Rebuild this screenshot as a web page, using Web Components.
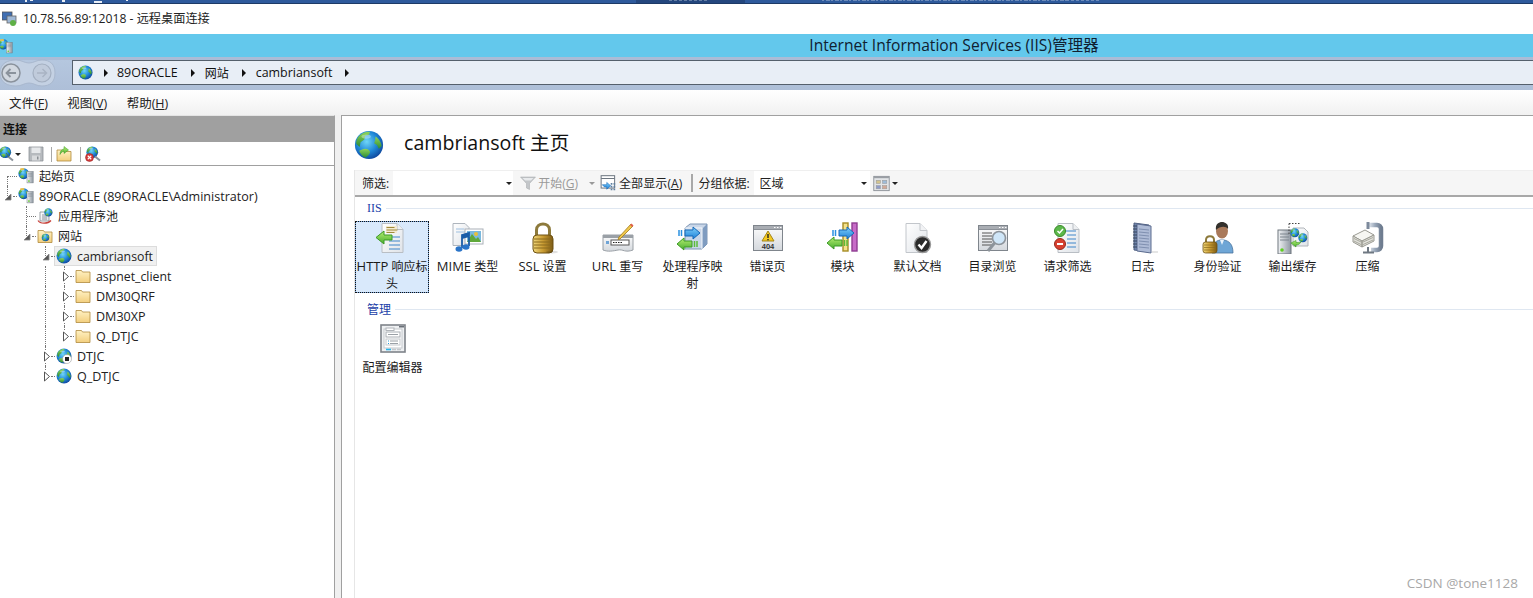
<!DOCTYPE html>
<html lang="zh">
<head>
<meta charset="utf-8">
<title>IIS</title>
<style>
  html, body { margin: 0; height: 100%; background: #fff; overflow: hidden; }
  body { font: 12px "Open Sans", "Noto Sans CJK SC", sans-serif; color: #1a1a1a; }
  feature-item span { font-size: 13px; }
</style>
</head>
<body>
<iis-app>
  <top-strip></top-strip>
  <rdp-title>10.78.56.89:12018 - 远程桌面连接</rdp-title>
  <iis-banner>Internet Information Services (IIS)管理器</iis-banner>
  <nav-bar>
    <crumb-item icon="globe"></crumb-item>
    <crumb-item>89ORACLE</crumb-item>
    <crumb-item cjk>网站</crumb-item>
    <crumb-item>cambriansoft</crumb-item>
  </nav-bar>
  <menu-bar>
    <span>文件(<u>F</u>)</span>
    <span>视图(<u>V</u>)</span>
    <span>帮助(<u>H</u>)</span>
  </menu-bar>
  <main-split>
    <conn-panel slot="left">
      <tree-node icon="start" cells="corner" cjk>起始页</tree-node>
      <tree-node icon="start" cells="open" wide>89ORACLE (89ORACLE\Administrator)</tree-node>
      <tree-node icon="pool" cells="none branch" cjk>应用程序池</tree-node>
      <tree-node icon="sites" cells="none open" cjk>网站</tree-node>
      <tree-node icon="globe" cells="none none open" selected>cambriansoft</tree-node>
      <tree-node icon="folder" cells="none none line closed">aspnet_client</tree-node>
      <tree-node icon="folder" cells="none none line closed" wide>DM30QRF</tree-node>
      <tree-node icon="folder" cells="none none line closed" wide>DM30XP</tree-node>
      <tree-node icon="folder" cells="none none line closed end" wide>Q_DTJC</tree-node>
      <tree-node icon="globestop" cells="none none closed" wide>DTJC</tree-node>
      <tree-node icon="globe" cells="none none closed end" wide>Q_DTJC</tree-node>
    </conn-panel>
    <home-page slot="right" heading="cambriansoft 主页">
      <filter-bar></filter-bar>
      <feature-group label="IIS">
        <feature-item icon="http" selected><span>HTTP</span> 响应标头</feature-item>
        <feature-item icon="mime"><span>MIME</span> 类型</feature-item>
        <feature-item icon="ssl"><span>SSL</span> 设置</feature-item>
        <feature-item icon="url"><span>URL</span> 重写</feature-item>
        <feature-item icon="handler">处理程序映射</feature-item>
        <feature-item icon="error">错误页</feature-item>
        <feature-item icon="modules">模块</feature-item>
        <feature-item icon="defdoc">默认文档</feature-item>
        <feature-item icon="browse">目录浏览</feature-item>
        <feature-item icon="reqfilter">请求筛选</feature-item>
        <feature-item icon="log">日志</feature-item>
        <feature-item icon="auth">身份验证</feature-item>
        <feature-item icon="cache">输出缓存</feature-item>
        <feature-item icon="compress">压缩</feature-item>
      </feature-group>
      <feature-group label="管理">
        <feature-item icon="config">配置编辑器</feature-item>
      </feature-group>
    </home-page>
  </main-split>
  <water-mark>CSDN @tone1128</water-mark>
</iis-app>

<script>
const DEFS = `<defs>
  <radialGradient id="sea" cx=".42" cy=".38" r=".68"><stop offset="0" stop-color="#6fd6f7"/><stop offset=".55" stop-color="#1f86d6"/><stop offset="1" stop-color="#0c3f96"/></radialGradient>
  <linearGradient id="land" x1="0" y1="0" x2="0" y2="1"><stop offset="0" stop-color="#8ed45a"/><stop offset="1" stop-color="#2c8c35"/></linearGradient>
  <linearGradient id="paper" x1="0" y1="0" x2="1" y2="1"><stop offset="0" stop-color="#fff"/><stop offset="1" stop-color="#dfe3e8"/></linearGradient>
  <linearGradient id="fold" x1="0" y1="0" x2="0" y2="1"><stop offset="0" stop-color="#fff2c4"/><stop offset="1" stop-color="#f3cf7e"/></linearGradient>
  <linearGradient id="steel" x1="0" y1="0" x2="1" y2="0"><stop offset="0" stop-color="#f2f4f6"/><stop offset="1" stop-color="#8f98a2"/></linearGradient>
  <linearGradient id="gold" x1="0" y1="0" x2="1" y2="0"><stop offset="0" stop-color="#f0d87c"/><stop offset=".5" stop-color="#c99b32"/><stop offset="1" stop-color="#7c5a14"/></linearGradient>
  <linearGradient id="blueArrow" x1="0" y1="0" x2="0" y2="1"><stop offset="0" stop-color="#7fd0fa"/><stop offset="1" stop-color="#1c7fd8"/></linearGradient>
  <linearGradient id="greenArrow" x1="0" y1="0" x2="0" y2="1"><stop offset="0" stop-color="#b6ee72"/><stop offset="1" stop-color="#46ad2e"/></linearGradient>
  <linearGradient id="win" x1="0" y1="0" x2="0" y2="1"><stop offset="0" stop-color="#fdfdfd"/><stop offset="1" stop-color="#d4d8dd"/></linearGradient>
  <linearGradient id="clamp" x1="0" y1="0" x2="1" y2="0"><stop offset="0" stop-color="#dfe5ec"/><stop offset=".5" stop-color="#9aa8ba"/><stop offset="1" stop-color="#6f7d90"/></linearGradient>
</defs>`;

// globe drawn in a 32 box, moved and scaled by the caller
const globe = (x = 0, y = 0, s = 1) => `<g transform="translate(${x} ${y}) scale(${s})">
  <circle cx="16" cy="16" r="15" fill="url(#sea)"/>
  <path d="M7 5c3-2.500 7-3.500 10-3l-1 3-4 1-1 4-4 3-1 5-3.500-3C2 11 4 7 7 5z" fill="url(#land)"/>
  <path d="M8 21c4-2 8-1 9 2 .5 2-2 5-5 6.500C9 28 6.500 25 5.500 22z" fill="url(#land)"/>
  <path d="M23 7c3 2 6 6 6.500 10l-3 3-2-4-3-2 1-3z" fill="url(#land)"/>
  <ellipse cx="13" cy="7" rx="5" ry="2.200" fill="#fff" opacity=".35"/>
</g>`;
const tower = (x, y, s = 1) => `<g transform="translate(${x} ${y}) scale(${s})">
  <rect x="0" y="0" width="13" height="24" fill="url(#steel)" stroke="#6f767e"/>
  <path d="M2 4h9M2 7h9M2 10h9" stroke="#7d858e"/>
  <circle cx="4" cy="20" r="1.800" fill="#5fd01f"/>
</g>`;
const arrowR = (x, y) => `<path transform="translate(${x} ${y})" d="M6 3h8V0l7 6-7 6V9H6z" fill="url(#blueArrow)" stroke="#1668b8"/><path transform="translate(${x} ${y})" d="M0 3v6M2.500 3v6" stroke="#2a90e0" stroke-width="1.500"/>`;
const arrowL = (x, y) => `<path transform="translate(${x} ${y})" d="M15 3H7V0L0 6l7 6V9h8z" fill="url(#greenArrow)" stroke="#3c9a26"/><path transform="translate(${x} ${y})" d="M17.500 3v6M20 3v6" stroke="#5cbc3a" stroke-width="1.500"/>`;
const page = `<path d="M6 1.500h15l6 6v23H6z" fill="url(#paper)" stroke="#b9bec4"/><path d="M21 1.500v6h6" fill="#eef0f2" stroke="#b9bec4"/>`;
const folder = `<path d="M2 8V5h11l2 3h15v21H2z" fill="url(#fold)" stroke="#b08a3e" stroke-width="1.600"/>`;
const winFrame = `<rect x="1.500" y="3.500" width="29" height="25" fill="url(#win)" stroke="#7f858c"/><path d="M2 7.500h28" stroke="#8b9097"/><rect x="2" y="4" width="28" height="3" fill="#a9adb3"/><path d="M22 5.500h1.500M25 5.500h1.500M28 5.500h1.500" stroke="#fff"/>`;

const ICONS = {
  globe: globe(),
  globestop: globe() + `<circle cx="22" cy="22" r="9" fill="#fff" stroke="#888"/><rect x="18" y="18" width="8" height="8" fill="#222"/>`,
  start: globe(0, 0, .72) + tower(18, 7, .95) + `<path d="M5 0h7l1 4H4z" fill="#f1c24c" opacity=".85"/>`,
  pool: `<path d="M6 8h18v18H6z" fill="url(#paper)" stroke="#7f858c" stroke-width="1.500"/><path d="M10 14h10M10 18h10M10 22h10" stroke="#6f7780" stroke-width="1.500"/>` + globe(14, 0, .55) + `<path d="M2 25c4 7 20 7 26 0" fill="none" stroke="#c8413a" stroke-width="2.400"/>`,
  sites: folder + globe(9, 11, .5),
  folder: folder,
  connect: globe(0, 0, .78) + `<path d="M18 21l10 8" stroke="#8a929b" stroke-width="4"/><path d="M14 14l6 8" stroke="#4f7f3c" stroke-width="2"/>`,
  save: `<path d="M2 2h28v28H2z" fill="#b6babe" stroke="#8a8f94" stroke-width="1.500"/><rect x="7" y="3" width="18" height="11" fill="#e6e8ea"/><rect x="8" y="19" width="16" height="10" fill="#d8dadc"/><rect x="18" y="21" width="3" height="6" fill="#8a8f94"/>`,
  upfolder: `<path d="M2 11V8h11l2 3h15v19H2z" fill="url(#fold)" stroke="#b08a3e" stroke-width="1.600"/><path d="M8 17c0-7 3-10 8-11V1l9 7-9 7v-5c-3 1-6 3-8 7z" fill="url(#greenArrow)" stroke="#3c9a26"/>`,
  disconnect: globe(2, 0, .78) + `<path d="M20 21l10 8" stroke="#8a929b" stroke-width="4"/><circle cx="9" cy="23" r="8" fill="#d63a3a" stroke="#8e1f1f"/><path d="M5.500 19.500l7 7M12.500 19.500l-7 7" stroke="#fff" stroke-width="2.200"/>`,
  funnel: `<path d="M1 4h30L19 17v12l-6-3v-9z" fill="#c3c6c9" stroke="#a3a6a9"/><path d="M5 6h22l-5 5H10z" fill="#e8eaec"/>`,
  showall: `<rect x="2" y="3" width="24" height="22" fill="#fff" stroke="#6d7680" stroke-width="1.800"/><path d="M2 8h24" stroke="#6d7680" stroke-width="1.800"/><path d="M19 16h3v3h-3zM24 16h3v3h-3zM19 21h3v3h-3zM24 21h3v3h-3zM24 26h3v3h-3zM19 26h3v3h-3z" fill="#5f7f9f"/><path d="M4 19h8v-4l7 6-7 6v-4H8z" fill="url(#blueArrow)" stroke="#1668b8"/>`,
  view: `<rect x="1.500" y="2.500" width="29" height="27" fill="#e3e5e8" stroke="#7f858c" stroke-width="1.500"/><rect x="2" y="3" width="28" height="3" fill="#9a9ea4"/><rect x="6" y="10" width="8" height="6" fill="#d2c48e" stroke="#999"/><rect x="18" y="10" width="8" height="6" fill="#9dbbd8" stroke="#999"/><rect x="6" y="20" width="8" height="6" fill="#8f9cc8" stroke="#999"/><rect x="18" y="20" width="8" height="6" fill="#d2a896" stroke="#999"/>`,
  http: page + `<rect x="10" y="4" width="11" height="7" fill="#f4ead0"/><path d="M10.500 5.500h8M10.500 8h11M10.500 10.500h8" stroke="#a08a3a"/><path d="M13 15h11M13 19h11M13 23h11M13 27h11" stroke="#3f86c9" stroke-width="1.200"/>` + `<path d="M16 13H8V9l-8 6.500L8 22v-4h8z" fill="url(#greenArrow)" stroke="#3c9a26"/>`,
  mime: `<path d="M1 1.500h12l4 4v18H1z" fill="url(#paper)" stroke="#aeb5bd"/><path d="M4 7h8M4 10h9" stroke="#9fc0e0"/>
    <rect x="13" y="7" width="18" height="15" fill="#fff" stroke="#a9b0b8"/><rect x="15" y="9" width="14" height="11" fill="#79b8de"/><path d="M15 20l5-8 4 5 2-2 3 5z" fill="#5fa83a"/><circle cx="24" cy="12" r="2" fill="#e8c03a"/>
    <path d="M10 13v13M17 11v13M10 13l7-2v3l-7 2z" stroke="#1b5da8" stroke-width="1.800" fill="#1b5da8"/><ellipse cx="7" cy="27" rx="3.500" ry="2.800" fill="#2a74c8"/><ellipse cx="14" cy="25" rx="3.500" ry="2.800" fill="#2a74c8"/>`,
  ssl: `<path d="M9.500 15V8c0-8 13-8 13 0v7" fill="none" stroke="#8d7a3c" stroke-width="3"/><rect x="6" y="13" width="20" height="18" rx="4" fill="url(#gold)" stroke="#6e5214"/><path d="M7 17h18M7 20h18M7 23h18M7 26h18" stroke="#8a6a1e"/><ellipse cx="25" cy="30" rx="6" ry="1.400" fill="#000" opacity=".12"/>`,
  url: `<path d="M1 13h30v15c-8 3-10-1-15 0-5 1-10 2-15 0z" fill="url(#win)" stroke="#9aa0a6"/><rect x="1" y="13" width="30" height="3" fill="#9aa0a6"/><rect x="9" y="18" width="18" height="5" fill="#fff" stroke="#555"/><path d="M11 20.500h9" stroke="#222" stroke-dasharray="1.500 1"/><rect x="4" y="19" width="3" height="3" fill="#6fa4d6"/><path d="M17 15L29 2l2 2-13 13-2 .5z" fill="#f0c84c" stroke="#a07a1c" stroke-width=".8"/><path d="M28 3l1.500-1.500 2 2L30 5z" fill="#e0604c"/>`,
  handler: `<path d="M8 6l5-4h17v20l-5 5H8z" fill="#c9d6e8" stroke="#7e96b4"/><path d="M25 7l5-5v20l-5 5z" fill="#7f9cc0"/><path d="M8 6h17v21" fill="none" stroke="#f5f8fc"/>` + arrowR(2, 5) + arrowL(0, 16),
  error: winFrame + `<path d="M16 9l6 10H10z" fill="#f4c91f" stroke="#a4851a"/><rect x="15.300" y="12" width="1.400" height="4" fill="#222"/><rect x="15.300" y="17" width="1.400" height="1.300" fill="#222"/><text x="16" y="27" text-anchor="middle" font-family="Liberation Sans" font-weight="700" font-size="7.500" fill="#333">404</text>`,
  modules: `<rect x="16" y="1" width="5" height="28" fill="#f4e28c" stroke="#a68c24" stroke-width="1.400"/><rect x="25" y="1" width="5" height="28" fill="#c86cc8" stroke="#8f3c92" stroke-width="1.400"/>` + arrowR(6, 5) + arrowL(0, 15),
  defdoc: `<path d="M4 1.500h14l7 7v22H4z" fill="url(#paper)" stroke="#c2c6cb"/><path d="M18 1.500v7h7" fill="#f2f3f5" stroke="#c2c6cb"/><circle cx="20.500" cy="22.500" r="8" fill="#2a2a2a" stroke="#999" stroke-width="1.400"/><path d="M16.500 22.500l3 3.500 5-7" fill="none" stroke="#fff" stroke-width="2.400"/>`,
  browse: winFrame + `<path d="M5 11h10M5 14h10M5 17h10M5 20h10M5 23h10" stroke="#555"/><circle cx="22" cy="16" r="6.500" fill="#cfe6f8" stroke="#8d949b" stroke-width="1.600"/><path d="M17.500 21L11 29" stroke="#8d949b" stroke-width="3"/>`,
  reqfilter: page + `<path d="M13 9h11M15 13h9M15 17h9M15 21h9M15 25h9" stroke="#3f86c9" stroke-width="1.200"/><circle cx="8" cy="9" r="5.500" fill="#5cb84a" stroke="#3a8a2a"/><path d="M5.500 9l2 2 3.500-4" fill="none" stroke="#fff" stroke-width="1.500"/><circle cx="8" cy="22" r="5.500" fill="#d8402f" stroke="#952a1e"/><rect x="5" y="21" width="6" height="2" fill="#fff"/>`,
  log: `<path d="M7 1l15 2v27L7 28z" fill="#7186ad" stroke="#4f5f80"/><path d="M10 2l14 2v27l-14-2z" fill="#aebbd6" stroke="#5d6d90"/><path d="M12 7l10 1M12 10l10 1M12 13l10 1M12 16l10 1M12 19l10 1M12 22l10 1M12 25l10 1" stroke="#7f8fb0"/><path d="M6 4h4M6 7h4M6 10h4M6 13h4M6 16h4M6 19h4M6 22h4M6 25h4" stroke="#39465e"/><path d="M25 29h6v2h-6z" fill="#000" opacity=".1"/>`,
  auth: `<path d="M10 31c0-9 3-12 8-13h4c5 1 9 4 9 13z" fill="#6fa6d6" stroke="#47729c" stroke-width=".8"/><path d="M18 18l2 5 2-5z" fill="#eaf2fa"/><ellipse cx="20" cy="9" rx="6" ry="7.500" fill="#a9795a"/><path d="M14 8c-1-6 3-8 6-8s7 2 6 7c-2-3-8-3-12 1z" fill="#33302c"/><path d="M4 21v-3c0-5 8-5 8 0v3" fill="none" stroke="#8d7a3c" stroke-width="2"/><rect x="1" y="20" width="14" height="11" rx="2.500" fill="url(#gold)" stroke="#6e5214" stroke-width=".8"/><path d="M2 23h12M2 25.500h12M2 28h12" stroke="#8a6a1e" stroke-width=".7"/>`,
  cache: tower(1, 8, 1) + `<path d="M12 1.500h11M12 1.500v11" fill="none" stroke="#444" stroke-dasharray="1.500 1.500"/><path d="M16 6h11l4 4v14H16z" fill="url(#paper)" stroke="#b0b5ba"/>` + globe(13, 6, .3) + globe(21, 11, .3) + `<path d="M14 21l5 4v-2c2 0 4-1 5-3-2 .5-3 .5-5 .5v-2z" fill="url(#greenArrow)" stroke="#3c9a26" stroke-width=".6"/>`,
  compress: `<path d="M17 3h8a4 4 0 014 4v17a4 4 0 01-4 4h-6" fill="none" stroke="url(#clamp)" stroke-width="4.500"/><path d="M16 0v7" stroke="#7d8a9c" stroke-width="3"/><path d="M1 14l12-6 9 5-12 6z" fill="#f6f6f2" stroke="#9a9a92"/><path d="M1 14v6l9 5v-6zM10 19v6l12-6v-6z" fill="#e2e2dc" stroke="#9a9a92"/><path d="M2 16.500l8 4 11-5M2 19l8 4 11-5" stroke="#a8a89e" fill="none"/><path d="M16 25v6M11 30.500h11" stroke="#6f7882" stroke-width="2"/>`,
  config: `<rect x="4" y="2" width="24" height="27" fill="#eef0f2" stroke="#7e8389" stroke-width="1.600"/><rect x="22" y="3" width="5" height="1.500" fill="#6a7078"/><rect x="7" y="6" width="18" height="19" fill="#fff" stroke="#c3c7cc"/><rect x="9" y="5" width="8" height="2.500" fill="#fff" stroke="#b0b4b9"/><rect x="9" y="9" width="14" height="5" fill="#fff" stroke="#a8adb3"/><path d="M11 11.500h10" stroke="#9aa0a6"/><rect x="9" y="16" width="14" height="6" fill="#fff" stroke="#c3c7cc"/><path d="M13 18h8M13 20.500h8" stroke="#9aa0a6"/><path d="M11 18h1M11 20.500h1" stroke="#2a9ad6"/><path d="M9 26.500h5" stroke="#2bb6ea" stroke-width="1.600"/><path d="M15 26.500h4M20 26.500h4" stroke="#c3c7cc" stroke-width="1.600"/>`
};

class IisIcon extends HTMLElement {
  connectedCallback() {
    const size = this.getAttribute("size") || 16;
    const shadow = this.shadowRoot || this.attachShadow({ mode: "open" });
    shadow.innerHTML = `<style>:host{display:block;width:${size}px;height:${size}px;flex:none}svg{display:block}</style>
      <svg width="${size}" height="${size}" viewBox="0 0 32 32">${DEFS}${ICONS[this.getAttribute("name")] || ""}</svg>`;
  }
}

class IisApp extends HTMLElement {
  constructor() {
    super();
    this.attachShadow({ mode: "open" }).innerHTML = `<style>
      :host{display:flex;flex-direction:column;height:598px;position:relative;overflow:hidden}
    </style><slot></slot>`;
  }
}

class TopStrip extends HTMLElement {
  constructor() {
    super();
    this.attachShadow({ mode: "open" }).innerHTML = `<style>
      :host{display:block;height:4px;background:#2e5a9c;border-bottom:1px solid #1d3a66;box-sizing:border-box;flex:none}
      svg{display:block}
    </style>
    <svg width="1533" height="3">
      <rect x="636" width="109" height="3" fill="#24477e"/>
      <g fill="#e8eef6">
        <rect x="25" width="2" height="2"/><rect x="30" width="3" height="1"/><rect x="62" width="3" height="2"/><rect x="94" y="1" width="8" height="2"/><rect x="126" width="2" height="1"/>
      </g>
      <g stroke="#dfe7f2" stroke-width="2" opacity=".35">
        <path d="M669 0h40" stroke-dasharray="3 2"/>
        <path d="M822 0h246" stroke-dasharray="2 2 4 1"/>
        <path d="M1061 0h38" stroke-dasharray="3 2"/>
      </g>
    </svg>`;
  }
}

class RdpTitle extends HTMLElement {
  constructor() {
    super();
    this.attachShadow({ mode: "open" }).innerHTML = `<style>
      :host{display:flex;align-items:center;gap:6px;height:30px;flex:none;box-sizing:border-box;background:#fff;padding:0 0 2px 2px;font-size:12.200px;color:#222}
      svg{flex:none}
    </style>
    <svg width="15" height="15" viewBox="0 0 15 15">
      <rect x="0" y="1" width="10" height="8" fill="#3f6fb4" stroke="#555" stroke-width=".8"/>
      <rect x="5" y="5" width="9" height="7" fill="#9fb8d6" stroke="#666" stroke-width=".8"/>
      <circle cx="11" cy="12" r="3" fill="#5fb046"/>
    </svg><slot></slot>`;
  }
}

class IisBanner extends HTMLElement {
  constructor() {
    super();
    this.attachShadow({ mode: "open" }).innerHTML = `<style>
      :host{display:flex;align-items:center;height:23px;flex:none;box-sizing:border-box;padding-bottom:2px;background:#63c8ec;font-size:15.600px;color:#102030}
      iis-icon{margin-left:-2px;margin-top:4px}
      .t{flex:1;text-align:center;padding-left:362px;white-space:nowrap}
    </style><iis-icon name="start" size="15"></iis-icon><div class="t"><slot></slot></div>`;
  }
}

class NavBar extends HTMLElement {
  constructor() {
    super();
    this.attachShadow({ mode: "open" }).innerHTML = `<style>
      :host{display:flex;height:33px;flex:none;box-sizing:border-box;padding-top:3px;background:linear-gradient(#aabcd6 0 3px,#b5c7df 3px,#aebfd8)}
      .nav{width:72px;flex:none;padding:0;box-sizing:border-box}
      svg{display:block;margin-top:-1px}
      .addr{flex:1;height:25px;box-sizing:border-box;background:#e8eef6;border:1px solid #55606c;border-width:1px 0 1px 1px;display:flex;align-items:center;padding-left:5px;font-size:12.450px;color:#111}
    </style>
    <div class="nav">
      <svg width="56" height="28" viewBox="0 0 56 28">
        <path d="M0 14C0 4 8 1 16 1c6 0 8 3 13 3s7-3 13-3c8 0 13 4 13 13s-5 13-13 13c-6 0-8-3-13-3s-7 3-13 3C8 27 0 24 0 14z" fill="#c4d1e3" stroke="#a9b8ce"/>
        <circle cx="11" cy="14" r="9" fill="#d2d8e0" stroke="#8a929c" stroke-width="1.500"/>
        <path d="M16 14H7M10.500 10L6.500 14l4 4" fill="none" stroke="#8a929c" stroke-width="1.800"/>
        <circle cx="42" cy="14" r="9" fill="#c0cbdb" stroke="#a3afc0" stroke-width="1.200"/>
        <path d="M37 14h9M42.500 10l4 4-4 4" fill="none" stroke="#a9b4c4" stroke-width="1.500"/>
      </svg>
    </div>
    <div class="addr"><slot></slot></div>`;
  }
}

class CrumbItem extends HTMLElement {
  constructor() {
    super();
    this.attachShadow({ mode: "open" });
  }
  connectedCallback() {
    const icon = this.getAttribute("icon");
    this.shadowRoot.innerHTML = `<style>
      :host{display:flex;align-items:center}
      :host([cjk]){font-size:12px}
      .a{width:0;height:0;border-left:4px solid #111;border-top:4px solid transparent;border-bottom:4px solid transparent;margin:0 ${icon ? 9 : 10}px 0 ${icon ? 11 : 13}px}
    </style>${icon ? `<iis-icon name="${icon}" size="15"></iis-icon>` : "<slot></slot>"}<span class="a"></span>`;
  }
}

class MenuBar extends HTMLElement {
  constructor() {
    super();
    this.attachShadow({ mode: "open" }).innerHTML = `<style>
      :host{display:flex;align-items:center;gap:19.500px;height:25px;flex:none;box-sizing:border-box;padding:0 0 1px 9px;background:linear-gradient(#fff,#f1f1f1);font-size:12.500px;color:#222}
    </style><slot></slot>`;
  }
}

class MainSplit extends HTMLElement {
  constructor() {
    super();
    this.attachShadow({ mode: "open" }).innerHTML = `<style>
      :host{display:flex;flex:1;min-height:0;background:#f0f0f0}
      .l{width:335px;flex:none;display:flex}
      .r{flex:1;margin-left:6px;display:flex;min-width:0}
    </style><div class="l"><slot name="left"></slot></div><div class="r"><slot name="right"></slot></div>`;
  }
}

class ConnPanel extends HTMLElement {
  constructor() {
    super();
    this.attachShadow({ mode: "open" }).innerHTML = `<style>
      :host{display:flex;flex-direction:column;flex:1;background:#fff;border-right:1px solid #a0a0a0;border-top:1px solid #e4e4e4}
      h2{margin:0;height:26px;background:#a0a0a0;font:600 12px/27px "Open Sans","Noto Sans CJK SC",sans-serif;color:#111;padding-left:3px}
      .bar{display:flex;align-items:center;height:24px;box-sizing:border-box;border-bottom:1px solid #a0a0a0;background:#fff;padding-top:1px}
      .bar i{display:block;width:1px;height:15px;background:#a8a8a8}
      .caret{width:0;height:0;border-top:3px solid #222;border-left:3px solid transparent;border-right:3px solid transparent}
      .tree{display:flex;flex-direction:column}
    </style>
    <h2>连接</h2>
    <div class="bar">
      <iis-icon name="connect" size="16" style="margin-left:-1px"></iis-icon><span class="caret" style="margin:0 7px 0 0"></span>
      <iis-icon name="save" size="16"></iis-icon><i style="margin:0 4px 0 7px"></i>
      <iis-icon name="upfolder" size="16"></iis-icon><i style="margin:0 4px 0 8px"></i>
      <iis-icon name="disconnect" size="16"></iis-icon>
    </div>
    <div class="tree"><slot></slot></div>`;
  }
}

const OPEN_MARK = `<svg class="mark" width="8" height="8" viewBox="0 0 8 8"><path d="M7 1v6H1z" fill="#555" stroke="#888" stroke-width=".8"/></svg>`;
const CLOSED_MARK = `<svg class="mark" width="8" height="11" viewBox="0 0 8 11"><path d="M1.500 1l5 4.500-5 4.500z" fill="#fff" stroke="#555"/></svg>`;

class TreeNode extends HTMLElement {
  constructor() {
    super();
    this.attachShadow({ mode: "open" });
  }
  connectedCallback() {
    const names = (this.getAttribute("cells") || "").split(" ");
    const end = names.includes("end");
    const cells = names.filter((c) => c !== "end");
    const html = cells.map((c) => {
      const mark = c === "open" ? OPEN_MARK : c === "closed" ? CLOSED_MARK : "";
      return `<span class="cell ${c} ${end && c === "closed" ? "end" : ""}">${mark}</span>`;
    }).join("");
    this.shadowRoot.innerHTML = `<style>
      :host{display:flex;align-items:center;height:20px;white-space:nowrap;color:#222;margin-left:-2px;font-size:12.300px}
      :host([cjk]){font-size:12px}
      :host([wide]){font-size:12.550px}
      .cell{display:block;width:19px;height:20px;flex:none;position:relative}
      .cell::before,.cell::after{content:"";position:absolute}
      .line::before,.branch::before,.closed::before{left:9px;top:0;bottom:0;border-left:1px dotted #777}
      .open::before{left:9px;top:0;bottom:10px;border-left:1px dotted #777}
      .closed.end::before{bottom:10px}
      .branch::after{left:10px;right:0;top:10px;border-top:1px dotted #777}
      .corner::before{left:9px;top:10px;bottom:0;border-left:1px dotted #777}
      .corner::after{left:10px;right:0;top:10px;border-top:1px dotted #777}
      .open::after,.closed::after{left:15px;right:0;top:10px;border-top:1px dotted #777}
      .mark{position:absolute;left:7px;top:5px;background:#fff}
      .open .mark{top:7px;left:6px;background:none}
      .box{display:flex;align-items:center;height:20px;box-sizing:border-box;padding:0 3px 0 1px;gap:5px;border:1px solid transparent;margin-left:-1px}
      :host([selected]) .box{background:#f0f0f0;border-color:#dcdcdc}
    </style>${html}<div class="box"><iis-icon name="${this.getAttribute("icon")}" size="16"></iis-icon><slot></slot></div>`;
  }
}

class HomePage extends HTMLElement {
  constructor() {
    super();
    this.attachShadow({ mode: "open" });
  }
  connectedCallback() {
    this.shadowRoot.innerHTML = `<style>
      :host{display:flex;flex-direction:column;flex:1;background:#fff;border-left:1px solid #a0a0a0;border-top:1px solid #a0a0a0;padding-left:13px;min-width:0}
      header{display:flex;align-items:center;gap:20px;height:54px;flex:none;box-sizing:border-box;padding:3px 0 0 12px;margin-left:-13px}
      h1{margin:0 0 7px;font:400 19.600px "Open Sans","Noto Sans CJK SC",sans-serif;color:#111}
      .body{flex:1;border-left:1px solid #e6e6e6;margin-left:-1px}
    </style>
    <header><iis-icon name="globe" size="30"></iis-icon><h1>${this.getAttribute("heading")}</h1></header>
    <div class="body"><slot></slot></div>`;
  }
}

class FilterBar extends HTMLElement {
  constructor() {
    super();
    this.attachShadow({ mode: "open" }).innerHTML = `<style>
      :host{display:flex;align-items:center;height:27px;box-sizing:border-box;background:#f6f6f6;border-top:1px solid #efefef;border-bottom:2px solid #a8a8a8;padding-left:7px;color:#222;font-size:12px;white-space:nowrap}
      .field{background:#fff;height:24px;display:flex;align-items:center;justify-content:flex-end;box-sizing:border-box;padding:0 1px 0 6px}
      .field span{flex:1}
      .caret{display:block;width:0;height:0;border-top:3px solid #222;border-left:3px solid transparent;border-right:3px solid transparent;flex:none}
      .dim{color:#9a9a9a}
      i{display:block;width:2px;height:18px;background:#a8a8a8;flex:none}
    </style>
    <span>筛选:</span>
    <div class="field" style="width:120px;margin-left:4px"><span></span><b class="caret"></b></div>
    <iis-icon name="funnel" size="16" style="margin-left:7px"></iis-icon>
    <span class="dim" style="margin-left:2px">开始(<u>G</u>)</span>
    <b class="caret" style="margin-left:11px;border-top-color:#999"></b>
    <iis-icon name="showall" size="18" style="margin-left:5px"></iis-icon>
    <span style="margin-left:1px;letter-spacing:.1px">全部显示(<u>A</u>)</span>
    <i style="margin-left:9px"></i>
    <span style="margin-left:5px">分组依据:</span>
    <div class="field" style="width:116px;margin-left:4px"><span>区域</span><b class="caret" style="margin-right:2px"></b></div>
    <iis-icon name="view" size="17" style="margin-left:3px"></iis-icon>
    <b class="caret" style="margin-left:2px"></b>`;
  }
}

class FeatureGroup extends HTMLElement {
  constructor() {
    super();
    this.attachShadow({ mode: "open" });
  }
  connectedCallback() {
    this.shadowRoot.innerHTML = `<style>
      :host{display:block;padding-bottom:7px}
      :host([label="IIS"]){margin-top:2px}
      .head{display:flex;align-items:center;height:18px;margin-bottom:4px;padding-left:12px;gap:4px;color:#1c3fa8;font:12px "Liberation Serif","Noto Sans CJK SC",serif}
      :host([label="管理"]) .head{font-family:"Open Sans","Noto Sans CJK SC",sans-serif}
      .head::after{content:"";flex:1;height:1px;background:#dfe7f1}
      .grid{display:flex;flex-wrap:wrap;align-items:flex-start}
    </style>
    <div class="head">${this.getAttribute("label")}</div>
    <div class="grid"><slot></slot></div>`;
  }
}

class FeatureItem extends HTMLElement {
  constructor() {
    super();
    this.attachShadow({ mode: "open" });
  }
  connectedCallback() {
    this.shadowRoot.innerHTML = `<style>
      :host{display:block;width:75px;box-sizing:border-box;text-align:center;font-size:12px;line-height:17px;color:#1a1a1a;padding:1px 1px 0}
      :host([selected]){width:74px;margin-right:1px;height:72px;background:#d9e9fb;box-shadow:inset 0 0 0 1px #7aa7dc;outline:1px dotted #111;outline-offset:-1px;padding:1px 0 0}
      iis-icon{margin:0 auto}
      .label{display:block;margin-top:4px;padding:0 1px;word-break:break-all}
    </style><iis-icon name="${this.getAttribute("icon")}" size="32"></iis-icon><span class="label"><slot></slot></span>`;
  }
}

class WaterMark extends HTMLElement {
  constructor() {
    super();
    this.attachShadow({ mode: "open" }).innerHTML = `<style>
      :host{position:absolute;right:15px;bottom:6px;color:#a8a8a8;font:13.500px "Open Sans",sans-serif}
    </style><slot></slot>`;
  }
}

customElements.define("iis-icon", IisIcon);
customElements.define("iis-app", IisApp);
customElements.define("top-strip", TopStrip);
customElements.define("rdp-title", RdpTitle);
customElements.define("iis-banner", IisBanner);
customElements.define("nav-bar", NavBar);
customElements.define("crumb-item", CrumbItem);
customElements.define("menu-bar", MenuBar);
customElements.define("main-split", MainSplit);
customElements.define("conn-panel", ConnPanel);
customElements.define("tree-node", TreeNode);
customElements.define("home-page", HomePage);
customElements.define("filter-bar", FilterBar);
customElements.define("feature-group", FeatureGroup);
customElements.define("feature-item", FeatureItem);
customElements.define("water-mark", WaterMark);
</script>
</body>
</html>
